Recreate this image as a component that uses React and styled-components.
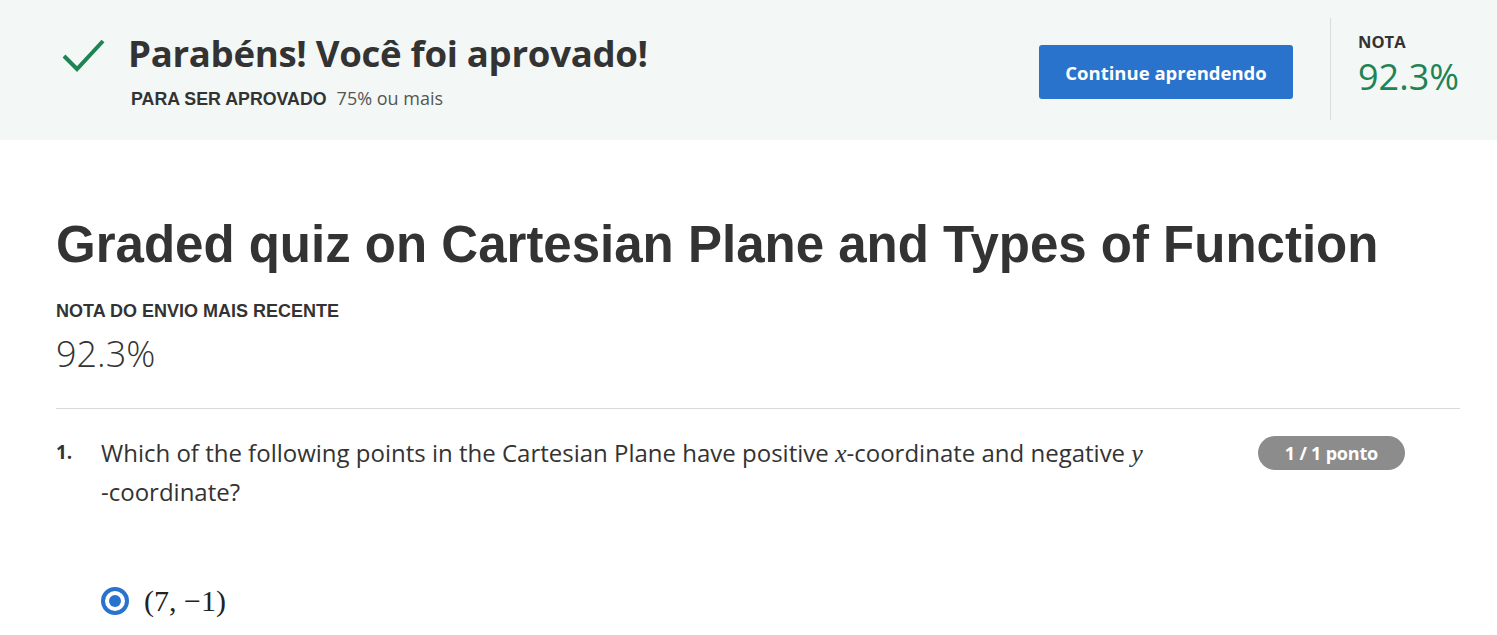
import styled, { createGlobalStyle } from "styled-components";

const Global = createGlobalStyle`
  body {
    margin: 0;
    background: #fff;
    font-family: "Open Sans", "Liberation Sans", sans-serif;
    color: #333;
  }
`;

const Banner = styled.header`
  background: #f3f8f6;
  height: 140px;
  display: flex;
  align-items: center;
  padding: 0 38px 0 60px;
  box-sizing: border-box;
`;

const Status = styled.div`
  flex: 1;
  display: flex;
  align-items: flex-start;
  gap: 22px;
`;

const Check = styled.svg`
  width: 46px;
  height: 46px;
  margin-top: 2px;
  flex: none;
`;

const StatusText = styled.div`
  display: flex;
  flex-direction: column;
  gap: 10px;
`;

const Heading = styled.h1`
  margin: 0;
  font-size: 36.6px;
  font-weight: 700;
  line-height: 46px;
  color: #333;
  letter-spacing: -0.3px;
`;

const Requirement = styled.div`
  display: flex;
  align-items: baseline;
  gap: 10px;
  padding-left: 3px;
  font-size: 18px;
  color: #555;
`;

const SmallLabel = styled.span`
  font-family: "Liberation Sans", Arial, sans-serif;
  font-weight: 700;
  font-size: 17.8px;
  color: #333;
`;

const PrimaryButton = styled.button`
  width: 254px;
  height: 54px;
  border: none;
  border-radius: 3px;
  background: #2a73cc;
  color: #fff;
  font-family: "Open Sans", sans-serif;
  font-weight: 700;
  font-size: 18.5px;
  cursor: pointer;
  margin-top: 4px;
`;

const Divider = styled.div`
  width: 1px;
  align-self: stretch;
  margin: 18px 27px 20px 37px;
  background: #d9dedc;
`;

const Score = styled.div`
  display: flex;
  flex-direction: column;
  gap: 4px;
  margin-top: -10px;
`;

const ScoreLabel = styled.span`
  font-weight: 700;
  font-size: 16.5px;
  line-height: 20px;
  color: #333;
`;

const ScoreValue = styled.span`
  font-size: 36px;
  line-height: 42px;
  color: #1f8354;
`;

const Main = styled.main`
  padding: 74px 37px 0 56px;
`;

const QuizTitle = styled.h2`
  margin: 0;
  font-family: "Liberation Sans", Arial, sans-serif;
  font-weight: 700;
  font-size: 51px;
  line-height: 62px;
  color: #333;
`;

const SubLabel = styled.div`
  margin-top: 25px;
  font-family: "Liberation Sans", Arial, sans-serif;
  font-weight: 700;
  font-size: 18px;
  color: #333;
`;

const BigGrade = styled.div`
  margin-top: 8px;
  font-size: 36px;
  font-weight: 300;
  line-height: 48px;
  color: #333;
`;

const Rule = styled.hr`
  margin: 30px 0 0;
  border: none;
  border-top: 1px solid #d9d9d9;
`;

const Question = styled.div`
  display: flex;
  align-items: flex-start;
  margin-top: 25px;
`;

const Number = styled.span`
  width: 45px;
  flex: none;
  font-weight: 700;
  font-size: 19px;
  line-height: 36px;
  color: #333;
`;

const Prompt = styled.p`
  margin: 0;
  max-width: 1080px;
  font-size: 24px;
  line-height: 38px;
  color: #333;
`;

const MathVar = styled.i`
  font-family: "Liberation Serif", "DejaVu Serif", serif;
  font-size: 26px;
`;

const Badge = styled.span`
  flex: none;
  margin: 2px 55px 0 auto;
  padding: 0 27px;
  height: 34px;
  line-height: 34px;
  border-radius: 17px;
  background: #8c8c8c;
  color: #fff;
  font-weight: 700;
  font-size: 18px;
  letter-spacing: -0.2px;
`;

const Options = styled.div`
  margin-top: 72px;
  padding-left: 45px;
`;

const Option = styled.label`
  display: flex;
  align-items: center;
  gap: 15px;
`;

const Radio = styled.span`
  width: 28px;
  height: 28px;
  box-sizing: border-box;
  border-radius: 50%;
  border: 4px solid #2a73cc;
  display: flex;
  align-items: center;
  justify-content: center;
  &::after {
    content: "";
    width: 12px;
    height: 12px;
    border-radius: 50%;
    background: #2a73cc;
  }
`;

const MathText = styled.span`
  font-family: "Liberation Serif", "DejaVu Serif", serif;
  font-size: 30px;
  line-height: 36px;
  color: #222;
`;

export default function App() {
  return (
    <>
      <Global />
      <Banner>
        <Status>
          <Check viewBox="0 0 46 46">
            <path d="M4 24 L17 37 L43 9" fill="none" stroke="#1f8354" strokeWidth="4" />
          </Check>
          <StatusText>
            <Heading>Parabéns! Você foi aprovado!</Heading>
            <Requirement>
              <SmallLabel>PARA SER APROVADO</SmallLabel>
              75% ou mais
            </Requirement>
          </StatusText>
        </Status>
        <PrimaryButton>Continue aprendendo</PrimaryButton>
        <Divider />
        <Score>
          <ScoreLabel>NOTA</ScoreLabel>
          <ScoreValue>92.3%</ScoreValue>
        </Score>
      </Banner>
      <Main>
        <QuizTitle>Graded quiz on Cartesian Plane and Types of Function</QuizTitle>
        <SubLabel>NOTA DO ENVIO MAIS RECENTE</SubLabel>
        <BigGrade>92.3%</BigGrade>
        <Rule />
        <Question>
          <Number>1.</Number>
          <Prompt>
            Which of the following points in the Cartesian Plane have positive <MathVar>x</MathVar>-coordinate and negative <MathVar>y</MathVar>
            <br />-coordinate?
          </Prompt>
          <Badge>1 / 1 ponto</Badge>
        </Question>
        <Options>
          <Option>
            <Radio />
            <MathText>(7, −1)</MathText>
          </Option>
        </Options>
      </Main>
    </>
  );
}
